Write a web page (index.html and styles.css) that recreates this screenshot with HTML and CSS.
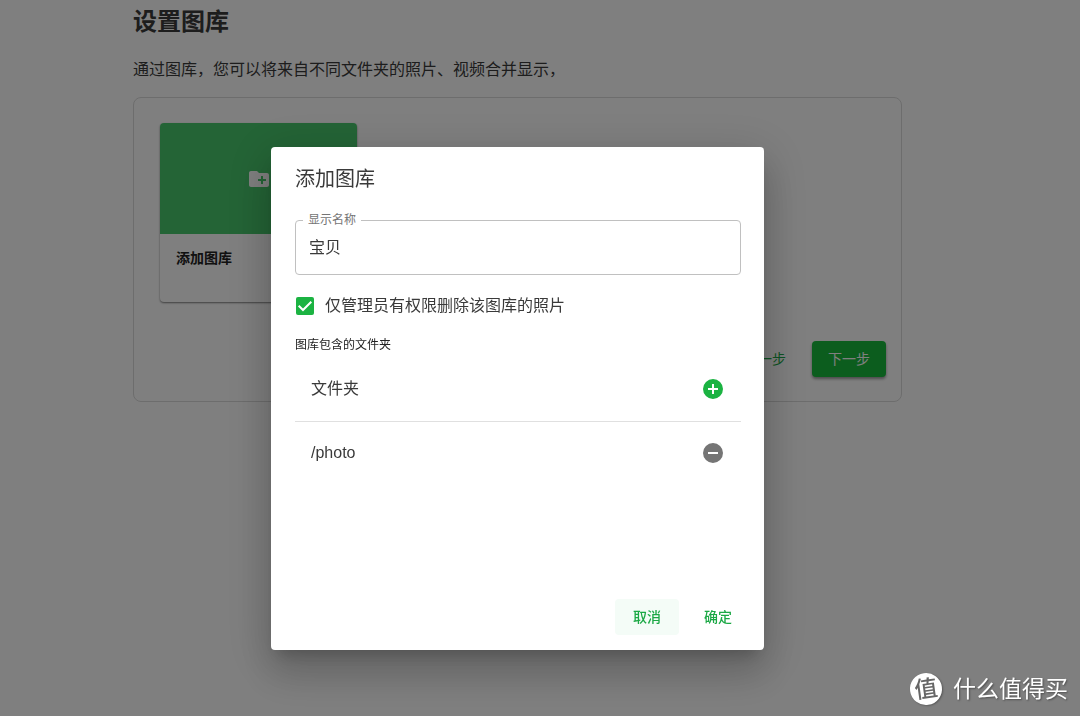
FILE: index.html
```html
<!DOCTYPE html>
<html lang="zh-CN">
<head>
<meta charset="utf-8">
<meta name="viewport" content="width=device-width, initial-scale=1">
<title>设置图库</title>
<link rel="stylesheet" href="styles.css">
</head>
<body>
<main class="page">
  <h1 class="page-title">设置图库</h1>
  <p class="page-intro">通过图库，您可以将来自不同文件夹的照片、视频合并显示，</p>
  <section class="panel">
    <article class="card">
      <div class="card-cover">
        <svg class="icon" viewBox="0 0 24 24" aria-hidden="true"><path fill="currentColor" d="M20 6h-8l-2-2H4c-1.110 0-1.990.890-1.990 2L2 18c0 1.110.890 2 2 2h16c1.110 0 2-.890 2-2V8c0-1.110-.890-2-2-2zm-1 8h-3v3h-2v-3h-3v-2h3V9h2v3h3v2z"/></svg>
      </div>
      <h2 class="card-title">添加图库</h2>
    </article>
    <div class="panel-actions">
      <button class="button button-plain" type="button">上一步</button>
      <button class="button button-primary" type="button">下一步</button>
    </div>
  </section>
</main>

<div class="backdrop">
  <form class="dialog" role="dialog" aria-labelledby="dialog-title">
    <h2 class="dialog-title" id="dialog-title">添加图库</h2>
    <div class="dialog-content">
      <div class="field">
        <label class="field-label" for="name">显示名称</label>
        <input class="field-input" id="name" type="text" value="宝贝">
      </div>
      <label class="check" for="admin-only">
        <span class="check-box">
          <input class="check-input" id="admin-only" type="checkbox" checked>
          <svg class="check-mark" viewBox="0 0 18 18" aria-hidden="true"><path fill="none" stroke="currentColor" stroke-width="2" d="M2.700 8.700 7 13l8.300-8.300"/></svg>
        </span>
        仅管理员有权限删除该图库的照片
      </label>
      <table class="folders">
        <caption class="folders-caption">图库包含的文件夹</caption>
        <thead>
          <tr>
            <th scope="col">文件夹</th>
            <td class="folders-action">
              <button class="icon-button icon-add" type="button" aria-label="添加文件夹">
                <svg class="icon" viewBox="0 0 24 24" aria-hidden="true"><path fill="currentColor" d="M12 2a10 10 0 1 0 0 20 10 10 0 0 0 0-20zm5 11h-4v4h-2v-4H7v-2h4V7h2v4h4v2z"/></svg>
              </button>
            </td>
          </tr>
        </thead>
        <tbody>
          <tr>
            <td>/photo</td>
            <td class="folders-action">
              <button class="icon-button" type="button" aria-label="移除文件夹">
                <svg class="icon" viewBox="0 0 24 24" aria-hidden="true"><path fill="currentColor" d="M12 2a10 10 0 1 0 0 20 10 10 0 0 0 0-20zm5 11H7v-2h10v2z"/></svg>
              </button>
            </td>
          </tr>
        </tbody>
      </table>
    </div>
    <div class="dialog-actions">
      <button class="button button-active" type="button">取消</button>
      <button class="button" type="submit">确定</button>
    </div>
  </form>
</div>

<div class="brand">
  <span class="brand-logo">值</span>
  <span class="brand-name">什么值得买</span>
</div>
</body>
</html>
```

FILE: styles.css
```css
* {
  box-sizing: border-box;
}

body {
  margin: 0;
  padding-right: 45px;
  background: #fff;
  color: #3a3a3a;
  font: 16px/24px "Liberation Sans", "Noto Sans CJK SC", sans-serif;
}

h1, h2, p {
  margin: 0;
}

button, input {
  font: inherit;
}

.icon {
  display: block;
  width: 24px;
  height: 24px;
}

.page {
  max-width: 769px;
  margin: 0 auto;
  padding-top: 4px;
}

.page-title {
  font-size: 24px;
  line-height: 36px;
}

.page-intro {
  margin: 18px 0 15px;
}

.panel {
  display: flex;
  flex-direction: column;
  padding: 25px 15px 24px 26px;
  border: 1px solid #dadada;
  border-radius: 8px;
}

.card {
  width: 197px;
  min-height: 179px;
  overflow: hidden;
  border-radius: 4px;
  box-shadow: 0 1px 2px rgba(0, 0, 0, .5);
}

.card-cover {
  display: flex;
  align-items: center;
  justify-content: center;
  height: 111px;
  background: #48c86c;
  color: #fff;
}

.card-title {
  padding: 12px 16px;
  color: #222;
  font-size: 14px;
  line-height: 24px;
}

.panel-actions {
  display: flex;
  justify-content: flex-end;
  gap: 10px;
  margin-top: 39px;
}

.button {
  min-width: 64px;
  height: 36px;
  padding: 0 16px;
  border: 0;
  border-radius: 4px;
  background: none;
  color: #1ba845;
  font-size: 14px;
  font-weight: 500;
}

.button-plain {
  font-weight: 400;
}

.button-primary {
  background: #18ba3c;
  color: #fff;
  font-weight: 400;
  box-shadow: 0 2px 3px rgba(0, 0, 0, .4);
}

.button-active {
  background: #f4fcf7;
}

.backdrop {
  position: fixed;
  inset: 0;
  display: flex;
  align-items: center;
  justify-content: center;
  padding: 81px 45px 0 0;
  background: rgba(0, 0, 0, .5);
}

.dialog {
  display: flex;
  flex-direction: column;
  width: 100%;
  max-width: 493px;
  border-radius: 4px;
  background: #fff;
  box-shadow: 0 11px 15px -7px rgba(0, 0, 0, .2), 0 24px 38px 3px rgba(0, 0, 0, .14), 0 9px 46px 8px rgba(0, 0, 0, .12);
}

.dialog-title {
  padding: 16px 24px 9px;
  font-size: 20px;
  font-weight: 400;
  line-height: 32px;
}

.dialog-content {
  min-height: 380px;
  padding: 16px 23px 0 24px;
}

.field {
  position: relative;
}

.field-label {
  position: absolute;
  top: -8px;
  left: 8px;
  padding: 0 5px;
  background: #fff;
  color: #757575;
  font-size: 12px;
  line-height: 16px;
}

.field-input {
  display: block;
  width: 100%;
  height: 55px;
  padding: 0 13px 4px;
  border: 1px solid #c0c0c0;
  border-radius: 4px;
  background: none;
  color: #3a3a3a;
}

.check {
  display: flex;
  align-items: center;
  gap: 11px;
  margin: 19px 0 17px;
  padding-left: 1px;
}

.check-box {
  display: grid;
}

.check-input,
.check-mark {
  grid-area: 1 / 1;
  width: 18px;
  height: 18px;
  margin: 0;
}

.check-input {
  appearance: none;
  border-radius: 2px;
  background: #1bb342;
}

.check-mark {
  color: #fff;
  pointer-events: none;
}

.folders {
  width: 100%;
  border-collapse: collapse;
}

.folders-caption {
  padding-bottom: 2px;
  color: #222;
  font-size: 12px;
  line-height: 20px;
  text-align: left;
}

.folders th,
.folders td {
  height: 64px;
  padding: 0 16px;
  font-weight: 400;
  text-align: left;
}

.folders thead {
  border-bottom: 1px solid #e0e0e0;
}

.folders .folders-action {
  width: 56px;
}

.icon-button {
  display: block;
  padding: 0;
  border: 0;
  background: none;
  color: #757575;
}

.icon-add {
  color: #1bb342;
}

.dialog-actions {
  display: flex;
  justify-content: flex-end;
  gap: 7px;
  padding: 15px 14px;
}

.brand {
  position: fixed;
  right: 12px;
  bottom: 11px;
  display: flex;
  align-items: center;
  gap: 11px;
  color: #fff;
  font-size: 23px;
  line-height: 32px;
  text-shadow: 1px 1px 2px rgba(0, 0, 0, .4);
}

.brand-logo {
  width: 32px;
  height: 32px;
  border-radius: 50%;
  background: #fff;
  box-shadow: 1px 1px 2px rgba(0, 0, 0, .3);
  color: #666;
  font-weight: 500;
  text-align: center;
  text-shadow: none;
  transform: rotate(-8deg);
}
```
